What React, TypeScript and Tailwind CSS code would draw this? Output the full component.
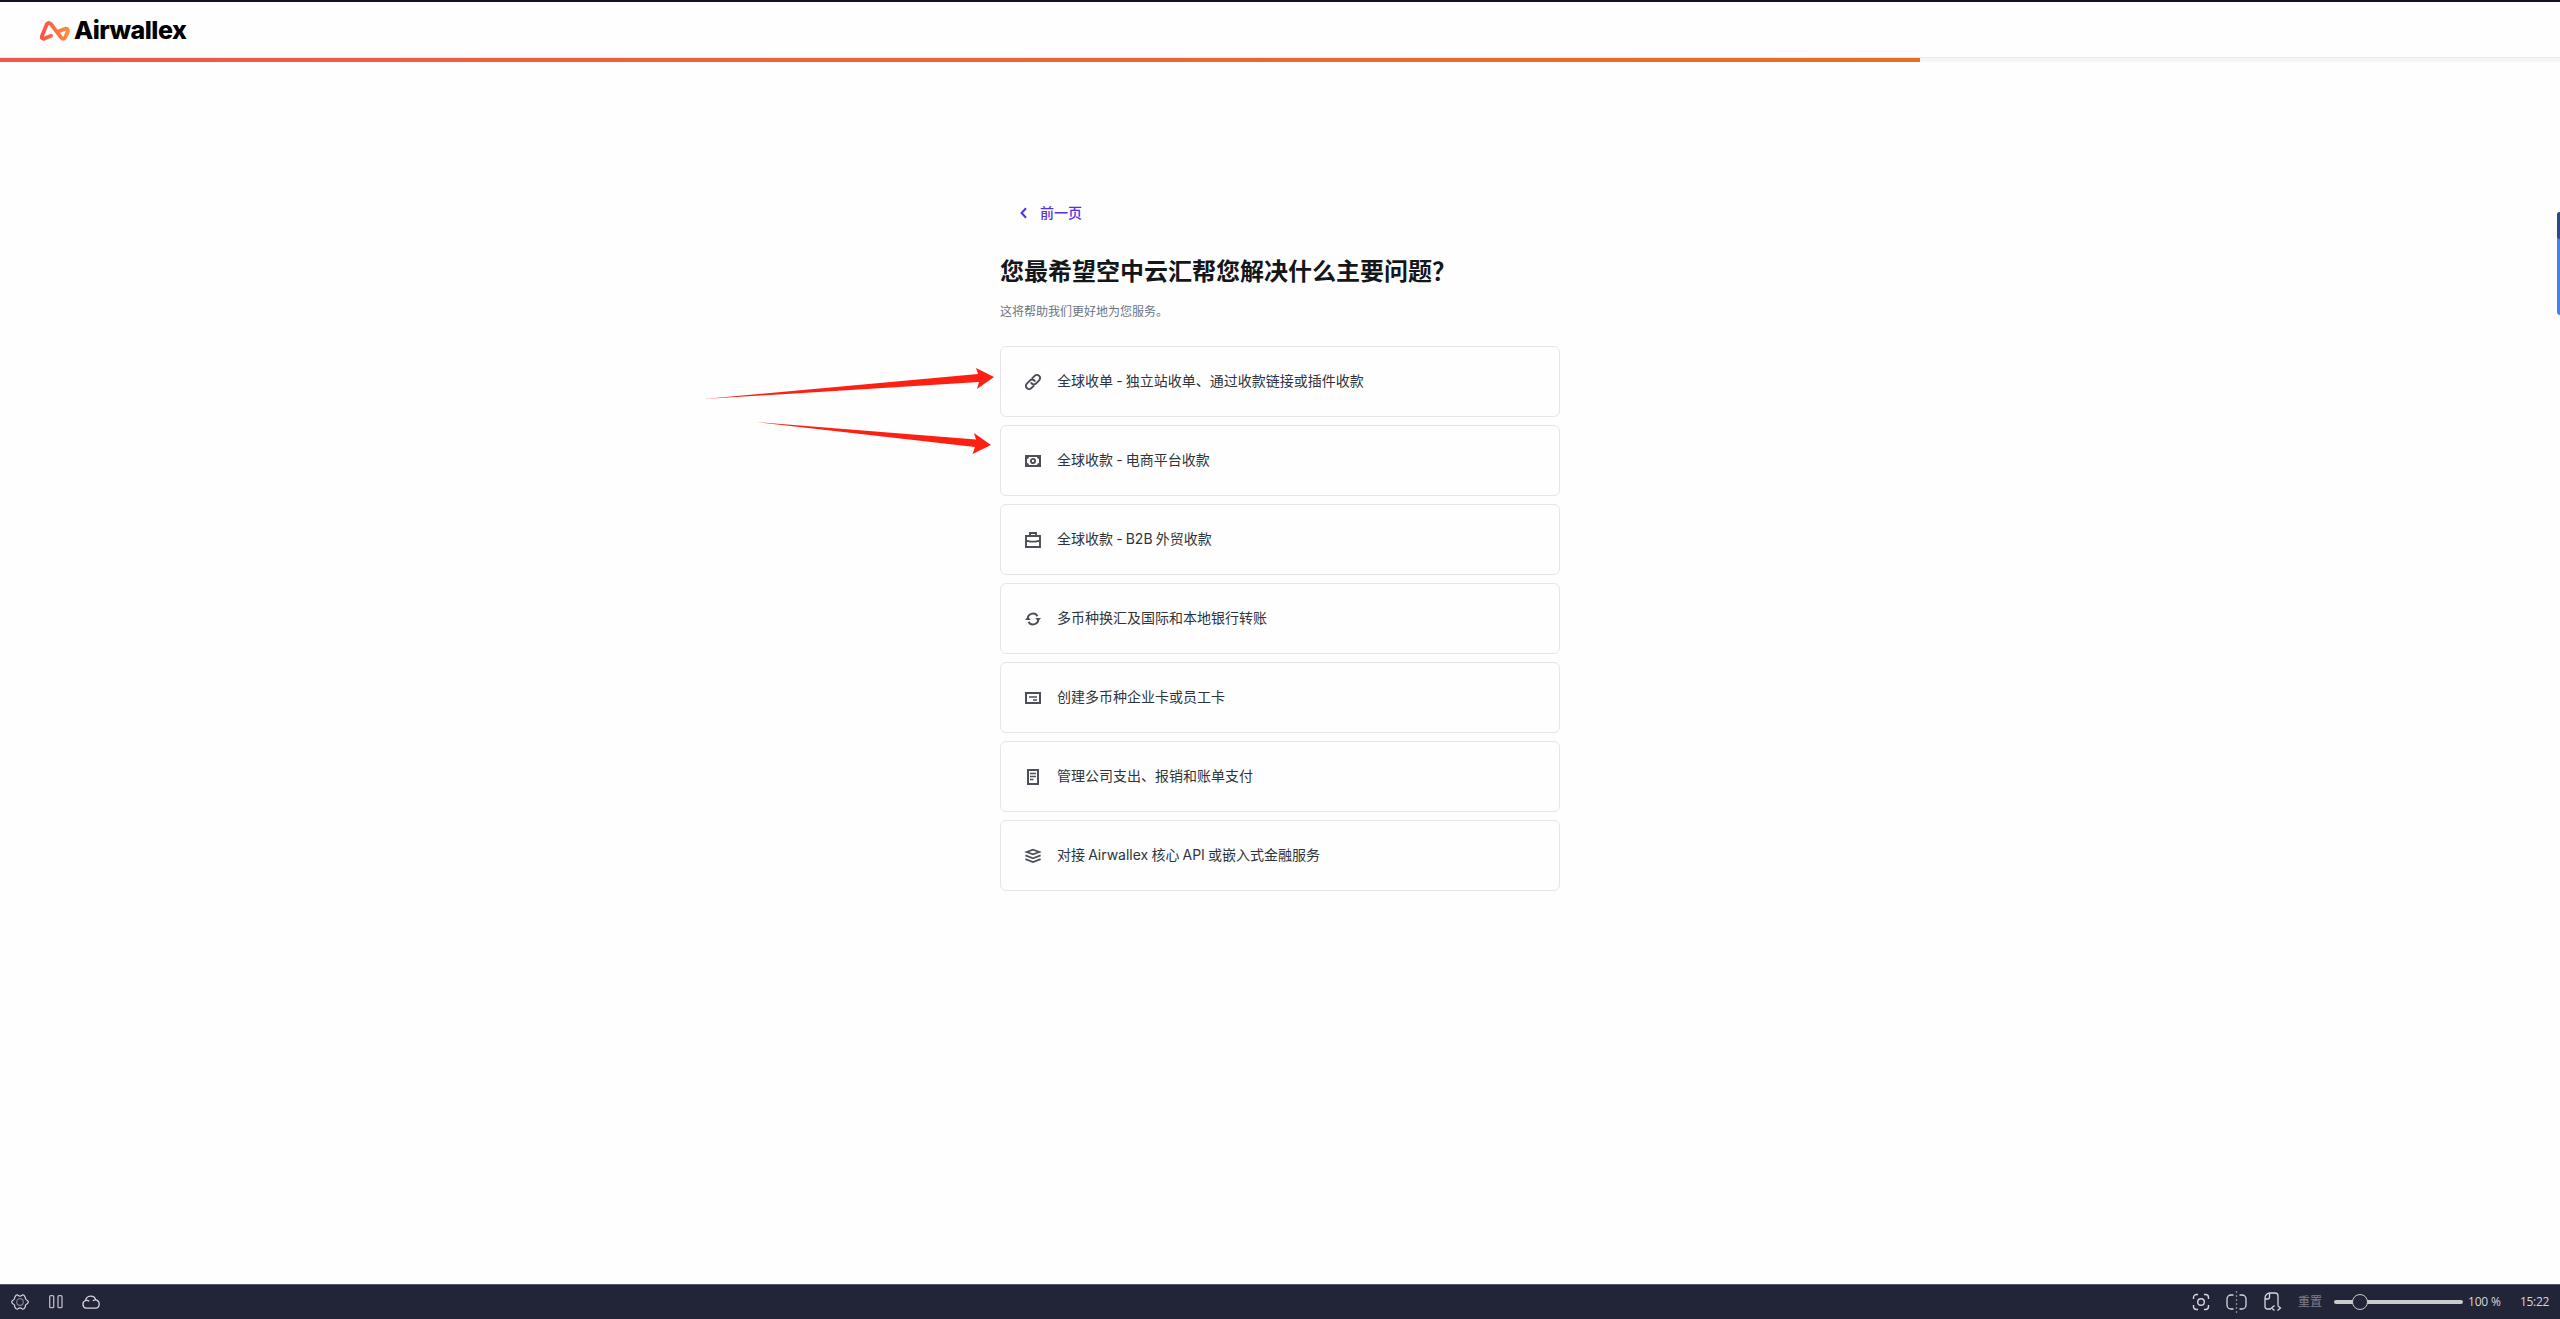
import type { ReactNode } from 'react';

const options: { label: string; icon: ReactNode }[] = [
  {
    label: '全球收单 - 独立站收单、通过收款链接或插件收款',
    icon: (
      <g strokeWidth="2" transform="rotate(-45 8 8)">
        <path d="M6.4 11.2H2.5a3.2 3.2 0 0 1 0-6.4h4.300a3.200 3.200 0 0 1 3 4.400" />
        <path d="M9.600 4.800h3.900a3.200 3.200 0 0 1 0 6.400H9.200a3.200 3.200 0 0 1-3-4.400" />
      </g>
    ),
  },
  {
    label: '全球收款 - 电商平台收款',
    icon: (
      <g>
        <path fill="currentColor" fillRule="evenodd" stroke="none" d="M0 2h16v12H0zM4 4a2 2 0 0 1-2 2v4a2 2 0 0 1 2 2h8a2 2 0 0 1 2-2V6a2 2 0 0 1-2-2z" />
        <circle cx="8" cy="8" r="2.1" strokeWidth="1.9" />
      </g>
    ),
  },
  {
    label: '全球收款 - B2B 外贸收款',
    icon: (
      <g strokeWidth="1.9">
        <path d="M1 4h14v11H1zM5 4V1h6v3M1 8.6l4.5 1h5l4.5-1" />
      </g>
    ),
  },
  {
    label: '多币种换汇及国际和本地银行转账',
    icon: (
      <g strokeWidth="1.9">
        <path d="M2.8 8.5a5.2 5.2 0 0 1 9.7-3.2M13.2 7.5a5.2 5.2 0 0 1-9.7 3.2" />
        <path fill="currentColor" stroke="none" d="M0 8.9h5.8L2.9 5.7zM10.2 7.1H16l-2.9 3.2z" />
      </g>
    ),
  },
  {
    label: '创建多币种企业卡或员工卡',
    icon: (
      <g strokeWidth="2">
        <path d="M1 3h14v10H1z" />
        <path strokeWidth="1.7" d="M4 7h8M8 10h4" />
      </g>
    ),
  },
  {
    label: '管理公司支出、报销和账单支付',
    icon: (
      <g strokeWidth="2">
        <path d="M3 1h10v14H3z" />
        <path strokeWidth="1.5" d="M5 4.4h6M5 7.4h6M5 10.4h3.5" />
      </g>
    ),
  },
  {
    label: '对接 Airwallex 核心 API 或嵌入式金融服务',
    icon: (
      <g strokeWidth="1.7">
        <path d="M1.6 4L8 1.6 14.4 4 8 6.4z" />
        <path d="M.4 7.4L8 10.3l7.6-2.9M.4 11.1L8 14l7.6-2.9" />
      </g>
    ),
  },
];

function Header() {
  return (
    <header className="h-[62px] border-t-2 border-[#14121f]">
      <div className="flex h-[55px] items-center pl-10">
        <svg className="mt-[2px] h-5 w-[30px]" viewBox="0 0 30 20" fill="none">
          <defs>
            <linearGradient id="mark" x1="0" y1="0" x2="30" y2="0" gradientUnits="userSpaceOnUse">
              <stop stopColor="#fa4f48" />
              <stop offset="1" stopColor="#ff8e3c" />
            </linearGradient>
          </defs>
          <path
            d="M11 14.8L4 17.8Q1.2 18 2 15L6.6 3.6Q8.4.6 11 3.2L20.8 16.2Q23.6 19.4 25.4 16L27.8 10.4Q28.4 7.4 25.2 7.8L18.2 10.6"
            stroke="url(#mark)"
            strokeWidth="3.8"
            strokeLinecap="round"
            strokeLinejoin="round"
          />
        </svg>
        <span className="ml-[4px] mt-[2px] font-['Inter',sans-serif] text-[25px] leading-none font-extrabold tracking-[-0.5px] text-black">
          Airwallex
        </span>
      </div>
      <div className="h-[5px] border-t border-[#e9e9ea] bg-[#f5f5f6]">
        <div className="h-1 w-3/4 bg-linear-to-r from-[#f25648] to-[#e66f22]" />
      </div>
    </header>
  );
}

function Arrows() {
  return (
    <svg className="absolute top-[360px] left-[700px] h-[100px] w-[300px]" viewBox="700 360 300 100" fill="#fb2012">
      <path d="M704 399L978 374 976 368 994 377 977 389 979 382z" />
      <path d="M756 422L976 439.5 974 433 991 445 972.5 454 975 447z" />
    </svg>
  );
}

function StatusBar() {
  return (
    <footer className="flex h-[35px] items-center border-t border-[#55566a] bg-[#222438] text-[#d5d7e0]">
      <div className="flex items-center pl-[11px]">
        <svg className="h-4 w-[18px]" viewBox="0 0 18 16" fill="none" stroke="currentColor" strokeWidth="1.2" strokeLinejoin="round">
          <path d="M5 1.2Q6.5.4 7.3 1.5 9 2.8 10.7 1.5 11.5.4 13 1.2L14.4 3.7Q14.2 5.5 16 6.2 17.8 7 17 8.8 16.6 9.8 15.4 10.2 14 11 14.4 12.6L13 14.8Q11.5 15.6 10.7 14.5 9 13.2 7.3 14.5 6.5 15.6 5 14.8L3.6 12.6Q4 11 2.6 10.2 1.4 9.8 1 8.8.2 7 2 6.2 3.8 5.5 3.6 3.7z" />
          <circle cx="9" cy="8" r="3.3" stroke="#7d7f8c" />
        </svg>
        <svg className="ml-5 h-[14px] w-[14px]" viewBox="0 0 14 14" fill="none" stroke="#b9bbc5" strokeWidth="1.3">
          <rect x=".7" y=".7" width="4" height="12" rx="1" />
          <rect x="9" y=".7" width="4" height="12" rx="1" />
        </svg>
        <svg className="ml-[18px] h-4 w-5" viewBox="0 0 20 16" fill="none" stroke="currentColor" strokeWidth="1.3">
          <path d="M5.2 14.2a4 4 0 0 1-.6-7.7 5.2 5.2 0 0 1 10.1-.7 4.3 4.3 0 0 1 .2 8.4zM4.6 6.5q2.2-.5 3.6.8M14.7 5.8q-1.7-.1-2.8 1.1" />
        </svg>
      </div>
      <div className="ml-auto flex items-center pr-3 font-['Open_Sans','Noto_Sans_CJK_SC',sans-serif] text-[12px] leading-none">
        <svg className="h-[18px] w-[18px]" viewBox="0 0 18 18" fill="none" stroke="currentColor" strokeWidth="1.4">
          <path d="M1.5 6V4.5a3 3 0 0 1 3-3H6M12 1.5h1.5a3 3 0 0 1 3 3V6M16.5 12v1.5a3 3 0 0 1-3 3H12M6 16.5H4.5a3 3 0 0 1-3-3V12" />
          <circle cx="9" cy="9" r="3.3" />
        </svg>
        <svg className="ml-4 h-[22px] w-[21px]" viewBox="0 0 21 22" fill="none" stroke="currentColor" strokeWidth="1.3">
          <path d="M7.5 4H5a4 4 0 0 0-4 4v6a4 4 0 0 0 4 4h2.5M13.5 4H16a4 4 0 0 1 4 4v6a4 4 0 0 1-4 4h-2.5" />
          <path d="M10.5 0v22" stroke="#858795" strokeDasharray="2 2" />
        </svg>
        <svg className="ml-[17px] h-5 w-[18px]" viewBox="0 0 18 20" fill="none" stroke="currentColor" strokeWidth="1.3">
          <path d="M7 17H3.5A2.5 2.5 0 0 1 1 14.5V6a5 5 0 0 1 5-5h5a3 3 0 0 1 3 3v9M1 7h2.5a2 2 0 0 0 2-2V1M10.5 13.5L7.5 16l3 2.5M13.5 13.5l3 2.5-3 2.5" />
        </svg>
        <span className="ml-4 text-[#7d7f8d]">重置</span>
        <div className="relative ml-3 h-1 w-[129px] rounded-full bg-[#c8cccb]">
          <div className="absolute top-[-6px] left-[18px] h-4 w-4 rounded-full border border-[#c8cccb] bg-[#222438]" />
        </div>
        <span className="ml-[5px] w-8 whitespace-nowrap tracking-[-0.2px]">100 %</span>
        <span className="ml-5 w-7 tracking-[-0.3px]">15:22</span>
      </div>
    </footer>
  );
}

export default function App() {
  return (
    <div className="relative flex h-[1319px] w-full flex-col overflow-hidden bg-[#fefefe] font-['Noto_Sans_CJK_SC',sans-serif]">
      <Header />
      <main className="mx-auto w-[560px] flex-1">
        <button className="mt-[140px] ml-5 flex h-5 items-center text-[14px] leading-5 font-medium text-[#5530e0]">
          <svg className="mt-[2px] mr-[13px] h-3 w-[7px]" viewBox="0 0 7 12" fill="none" stroke="currentColor" strokeWidth="2">
            <path d="M6 1.2L1.6 6 6 10.8" />
          </svg>
          前一页
        </button>
        <h1 className="mt-8 text-[24px] leading-8 font-bold text-[#14171a]">您最希望空中云汇帮您解决什么主要问题？</h1>
        <p className="mt-[17px] text-[12px] leading-4 text-[#6c747f]">这将帮助我们更好地为您服务。</p>
        <ul className="mt-[27px] flex flex-col gap-2">
          {options.map((option) => (
            <li key={option.label} className="flex h-[71px] items-center rounded-md border border-[#e4e6e9] px-6">
              <svg className="h-4 w-4 overflow-visible text-[#4c4f57]" viewBox="0 0 16 16" fill="none" stroke="currentColor">
                {option.icon}
              </svg>
              <span className="mb-px ml-4 font-['Inter','Noto_Sans_CJK_SC',sans-serif] text-[14px] leading-5 text-[#2f343b] [word-spacing:-0.8px]">
                {option.label}
              </span>
            </li>
          ))}
        </ul>
      </main>
      <Arrows />
      <div className="absolute top-[212px] right-0 h-[103px] w-[3px] overflow-hidden rounded-l-md bg-[#4580f0]">
        <div className="h-[27px] rounded-bl-md bg-[#2b4a86]" />
      </div>
      <StatusBar />
    </div>
  );
}
